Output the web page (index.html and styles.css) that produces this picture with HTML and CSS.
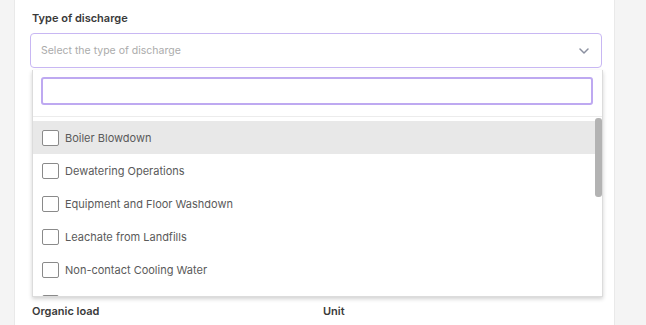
FILE: index.html
```html
<!DOCTYPE html>
<html lang="en">

<head>
  <meta charset="UTF-8">
  <meta name="viewport" content="width=device-width, initial-scale=1.0">
  <title>Discharge form</title>
  <link rel="stylesheet" href="styles.css">
</head>

<body>
  <div class="page">
    <aside class="side side-left"></aside>

    <main class="form">
      <div class="field">
        <label class="label">Type of discharge</label>
        <div class="select">
          <span class="placeholder">Select the type of discharge</span>
          <svg class="chevron" width="10" height="6" viewBox="0 0 10 6">
            <path d="M1 1l4 4 4-4" fill="none" stroke="#8b90a0" stroke-width="1.5" stroke-linecap="round" stroke-linejoin="round" />
          </svg>
        </div>

        <div class="dropdown">
          <div class="search-wrap">
            <input class="search" type="text">
          </div>
          <div class="list">
            <ul class="options">
              <li class="option active"><span class="check"></span>Boiler Blowdown</li>
              <li class="option"><span class="check"></span>Dewatering Operations</li>
              <li class="option"><span class="check"></span>Equipment and Floor Washdown</li>
              <li class="option"><span class="check"></span>Leachate from Landfills</li>
              <li class="option"><span class="check"></span>Non-contact Cooling Water</li>
              <li class="option"><span class="check"></span></li>
            </ul>
            <div class="scroll-thumb"></div>
          </div>
        </div>
      </div>

      <div class="row">
        <label class="label">Organic load</label>
        <label class="label">Unit</label>
      </div>
    </main>

    <aside class="side side-right"></aside>
  </div>
</body>

</html>
```

FILE: styles.css
```css
body {
  margin: 0;
  font-family: Inter, "Liberation Sans", sans-serif;
  background: #fff;
  overflow: hidden;
}

.page {
  display: flex;
  height: 325px;
}

.side {
  background: #f4f4f4;
}

.side-left {
  width: 14px;
  border-right: 1px solid #e9e9e9;
}

.side-right {
  flex: 1;
  border-left: 1px solid #e9e9e9;
}

.form {
  width: 571px;
  padding: 11px 12px 0 16px;
  background: #fff;
}

.label {
  display: block;
  font-size: 11px;
  line-height: 14px;
  font-weight: 600;
  color: #3a3a3a;
}

.field {
  position: relative;
  margin-bottom: 236px;
}

.field .label {
  margin-bottom: 8px;
  margin-left: 1px;
}

.select {
  display: flex;
  align-items: center;
  justify-content: space-between;
  height: 33px;
  margin-left: -1px;
  padding: 0 12px 0 10px;
  border: 1px solid #c8b7f3;
  border-radius: 4px;
}

.placeholder {
  font-size: 10.5px;
  color: #ababab;
}

.chevron {
  margin-top: 1px;
}

/* dropdown menu */
.dropdown {
  position: absolute;
  top: 59px;
  left: 1px;
  width: 569px;
  background: #fff;
  border: 1px solid #dcdcdc;
  border-top: none;
  box-shadow: 0 2px 4px rgba(0, 0, 0, 0.18);
}

.search-wrap {
  padding: 7px 9px 11px 8px;
  border-bottom: 1px solid #ececec;
}

.search {
  display: block;
  box-sizing: border-box;
  width: 100%;
  height: 28px;
  margin: 0;
  border: 2px solid #bea9f1;
  border-radius: 3px;
  outline: none;
}

.list {
  position: relative;
  height: 179px;
  overflow: hidden;
}

.options {
  list-style: none;
  margin: 0;
  padding: 4px 7px 0 0;
}

.scroll-thumb {
  position: absolute;
  top: 1px;
  right: 0;
  width: 7px;
  height: 79px;
  border-radius: 3px;
  background: #b3b3b3;
}

.option {
  display: flex;
  align-items: center;
  gap: 6px;
  height: 33px;
  padding-left: 9px;
  font-size: 11px;
  color: #5a5a5a;
}

.option.active {
  background: #e8e8e8;
}

.check {
  box-sizing: border-box;
  width: 17px;
  height: 16px;
  border: 1px solid #8a8a8a;
  border-radius: 2px;
  background: #fff;
}

.row {
  display: grid;
  grid-template-columns: 1fr 1fr;
  column-gap: 12px;
  padding-left: 1px;
}
```
